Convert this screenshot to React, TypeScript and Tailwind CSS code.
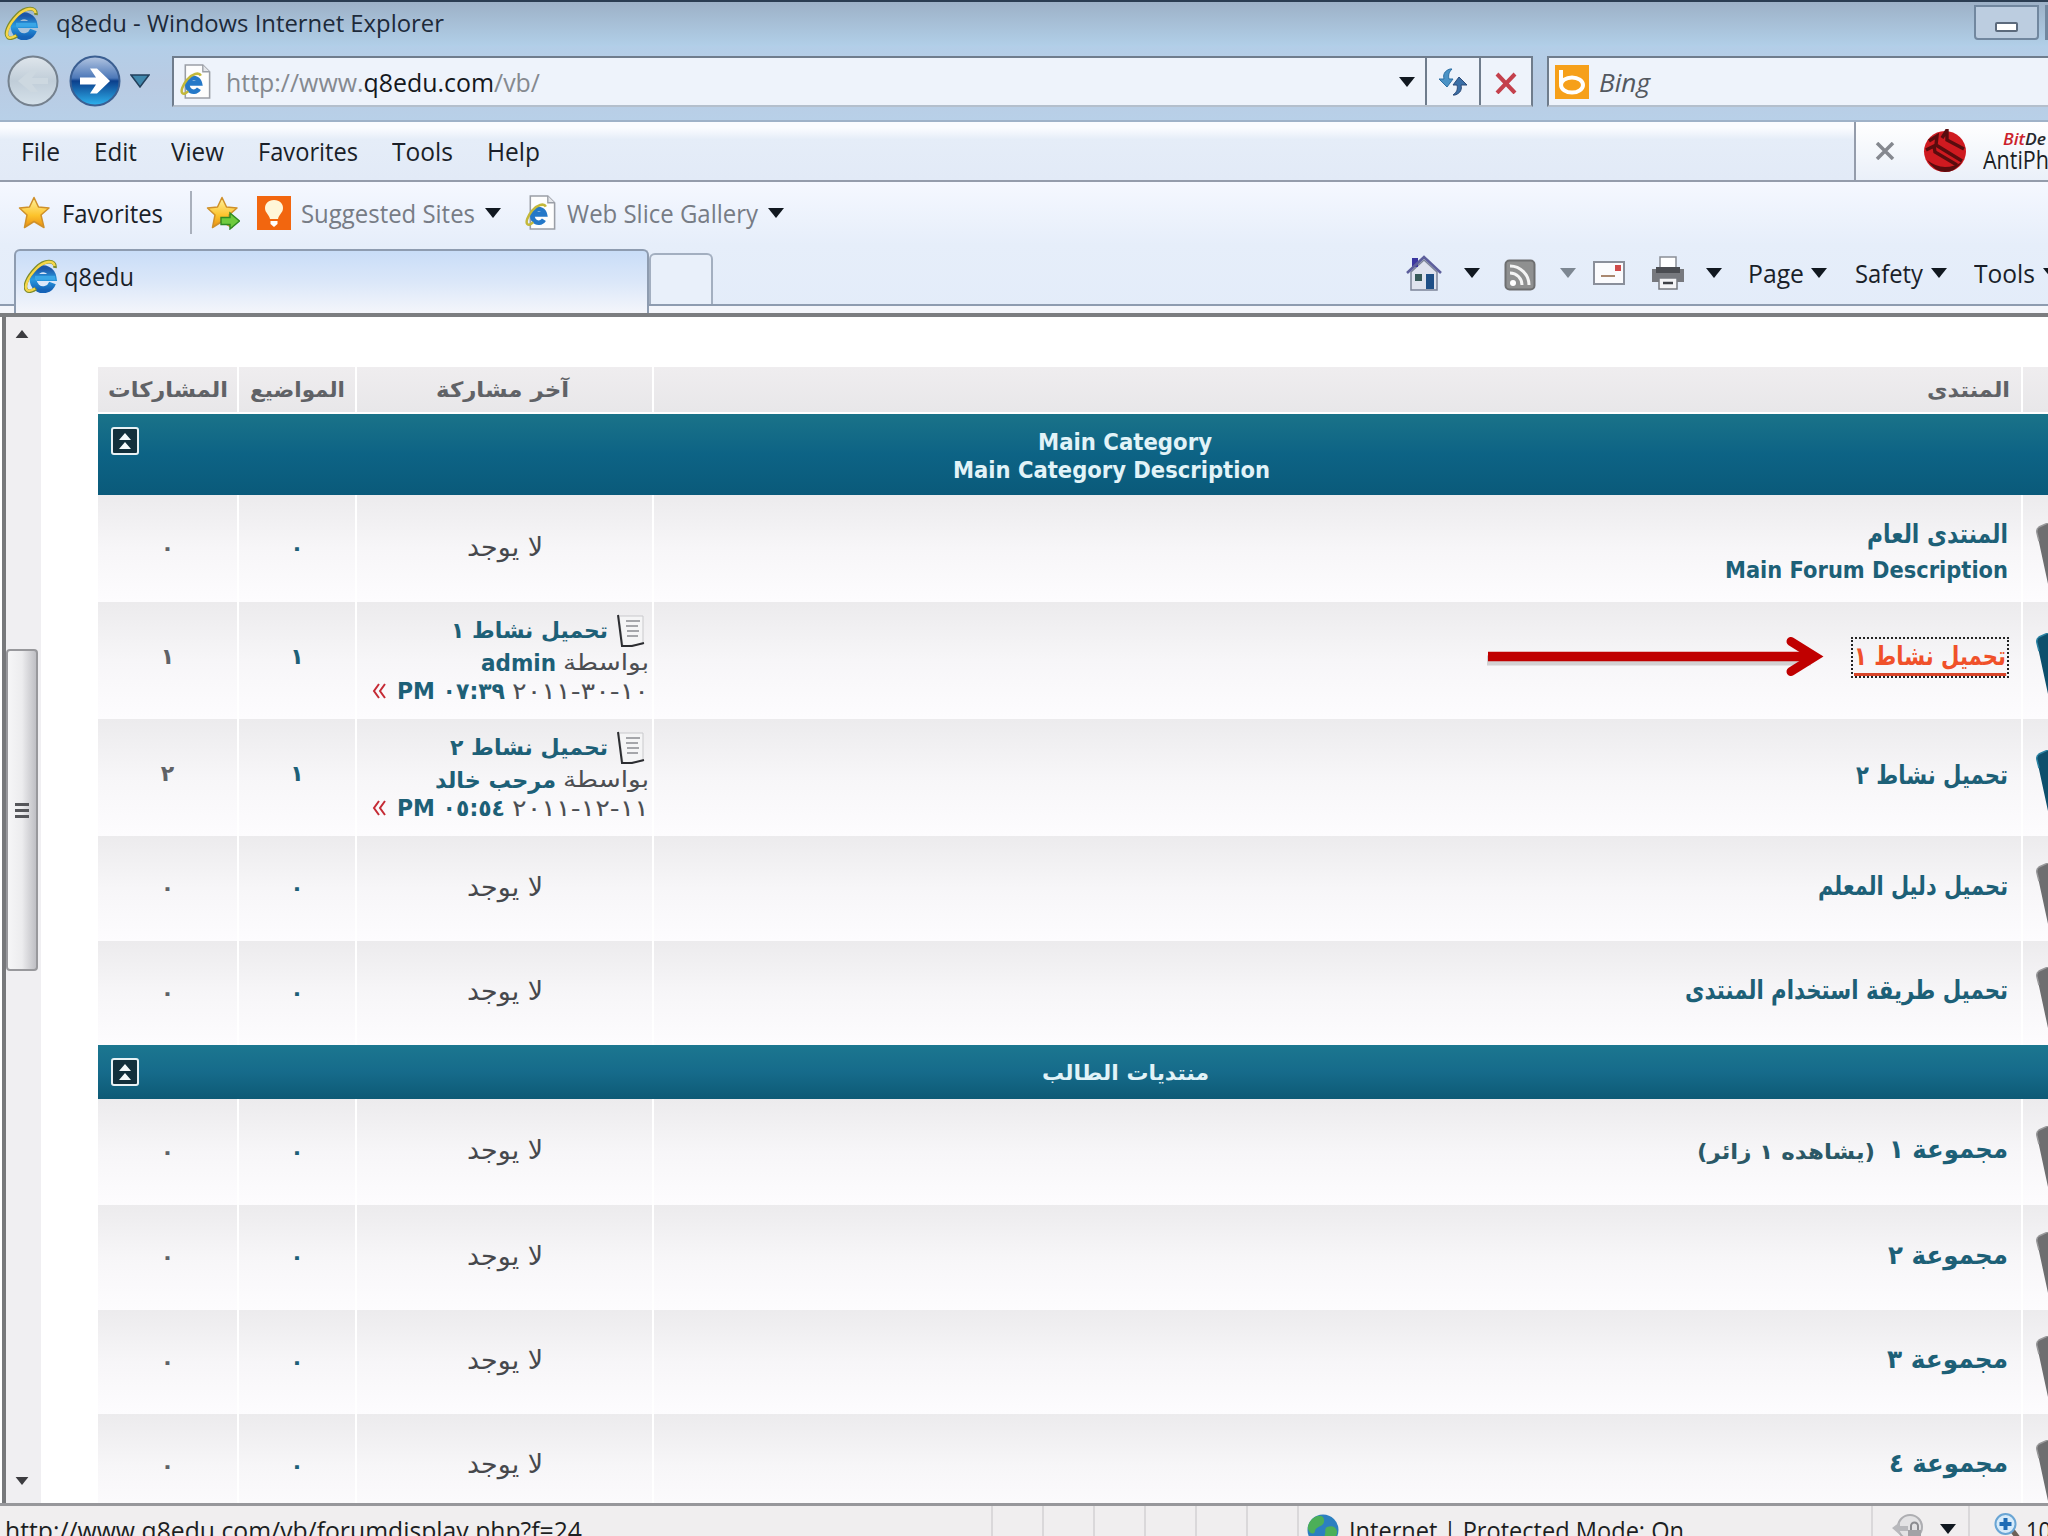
import { useLayoutEffect, useRef, useState } from 'react';
import type { ReactNode } from 'react';

const SANS = "font-['Open_Sans','Noto_Sans',sans-serif]";
const TAHOMA = "font-['DejaVu_Sans','Noto_Sans',sans-serif]";

// One line of text that is condensed or widened to fill exactly w pixels
function Fit({ w, className = '', dir = 'ltr', children }: { w: number; className?: string; dir?: 'ltr' | 'rtl'; children: ReactNode }) {
  const ref = useRef<HTMLSpanElement>(null);
  const [scale, setScale] = useState(1);

  useLayoutEffect(() => {
    if (ref.current) setScale(w / ref.current.getBoundingClientRect().width * scale);
  }, [w]);

  return (
    <span className="flex shrink-0 items-center" style={{ width: w }}>
      <span ref={ref} dir={dir} className={`block shrink-0 origin-left whitespace-pre ${className}`} style={{ transform: `scaleX(${scale})` }}>
        {children}
      </span>
    </span>
  );
}

function IELogo({ className = '' }: { className?: string }) {
  return (
    <svg viewBox="0 0 34 34" className={`shrink-0 ${className}`}>
      <defs>
        <linearGradient id="ie" x1="0" y1="0" x2="0" y2="1">
          <stop offset="0" stopColor="#1c56a8" />
          <stop offset="0.5" stopColor="#2a9be0" />
          <stop offset="1" stopColor="#1563b8" />
        </linearGradient>
      </defs>
      <path d="M28.500 24A10 10.500 0 1 1 29 18.500H13" fill="none" stroke="url(#ie)" strokeWidth="7" />
      <path d="M11 18.800h20" stroke="#3aa6e6" strokeWidth="4" />
      <path d="M31 9C32 0 20 1 12 9 3 18-1 28 3 31.500c2 1.500 6 0.500 9-2" fill="none" stroke="#7f8c2a" strokeWidth="3.600" />
      <path d="M30.500 7C30 0.500 20 2 12.500 9.500 3.500 18.500 0 28 3 31c2 1.500 5 0.500 8-1.500" fill="none" stroke="#f6d64a" strokeWidth="2.400" />
    </svg>
  );
}

function PageIcon({ className = '' }: { className?: string }) {
  return (
    <svg viewBox="0 0 32 36" className={`shrink-0 ${className}`}>
      <path d="M5 1h18l7 7v27H5z" fill="#fdfdfd" stroke="#9a9ea6" strokeWidth="1.600" />
      <path d="M23 1v7h7" fill="#e4e6ea" stroke="#9a9ea6" strokeWidth="1.400" />
      <path d="M19 25.500A6.500 7 0 1 1 20 20H9" fill="none" stroke="#2478c8" strokeWidth="4.800" />
      <path d="M21 12c-2-4-9-2-14 4S0 28 2 30c1 1 3 1 6-2" fill="none" stroke="#c3b83a" strokeWidth="2.600" />
    </svg>
  );
}

function Caret({ className = 'text-[#111820]' }: { className?: string }) {
  return (
    <svg viewBox="0 0 16 10" className={`h-2.5 w-4 shrink-0 ${className}`}>
      <path d="M0 0h16L8 10z" fill="currentColor" />
    </svg>
  );
}

function Star({ plus = false }: { plus?: boolean }) {
  return (
    <svg viewBox="0 0 34 34" className="h-[35px] w-[34px] shrink-0">
      <defs>
        <linearGradient id="star" x1="0" y1="0" x2="0" y2="1">
          <stop offset="0" stopColor="#fff3a0" />
          <stop offset="0.600" stopColor="#fcc32c" />
          <stop offset="1" stopColor="#e98d10" />
        </linearGradient>
      </defs>
      <path d="M16 2l4.500 9.500 10.500 1-8 7 3 12.500L16 26 6.500 32 9 19.500 1.500 12.500l10-1z" fill="url(#star)" stroke="#cf9029" strokeWidth="1.500" strokeLinejoin="round" />
      {plus && <path d="M15 22h9v-4.500l9.500 8-9.500 8V29h-9z" fill="#6fcb3e" stroke="#2e8a22" strokeWidth="1.400" />}
    </svg>
  );
}

function NavButton({ forward = false }: { forward?: boolean }) {
  return (
    <svg viewBox="0 0 54 54" className="h-[54px] w-[54px] shrink-0">
      <defs>
        <linearGradient id="fwd" x1="0" y1="0" x2="0" y2="1">
          <stop offset="0" stopColor="#b4c6e2" />
          <stop offset="0.440" stopColor="#4c78b8" />
          <stop offset="0.500" stopColor="#0b3f8c" />
          <stop offset="1" stopColor="#2fb4ef" />
        </linearGradient>
        <linearGradient id="back" x1="0" y1="0" x2="0" y2="1">
          <stop offset="0" stopColor="#dfe6ec" />
          <stop offset="0.500" stopColor="#c0cdd8" />
          <stop offset="1" stopColor="#d5e1ea" />
        </linearGradient>
      </defs>
      <circle cx="27" cy="27" r="24.500" fill={forward ? 'url(#fwd)' : 'url(#back)'} stroke={forward ? '#3b5f92' : '#75818e'} strokeWidth="2" />
      {forward ? (
        <path d="M12 23.500h16l-6-9h7l13 12.500-13 12.500h-7l6-9H12z" fill="#fff" />
      ) : (
        <path d="M42 24H26l6-8h-7L12 27l13 11h7l-6-8h16z" fill="#cdd8e0" />
      )}
    </svg>
  );
}

function TitleBar() {
  return (
    <div className="flex h-[46px] items-start border-t-2 border-[#2b3d52] bg-linear-to-b from-[#9db1c7] to-[#b1cfe8]">
      <IELogo className="mt-1 ml-1 h-[34px] w-[36px]" />
      <div className="mt-1 ml-4">
        <Fit w={388} className="text-2xl leading-[34px] text-[#1d2a3a]">q8edu - Windows Internet Explorer</Fit>
      </div>
      <div className="mt-[3px] ml-auto flex">
        <div className="flex h-[35px] w-[65px] items-center justify-center rounded-b border-2 border-[#71879f] bg-[#bccde0]">
          <div className="mt-2 h-2.5 w-[23px] rounded-xs border-2 border-[#5c6a7c] bg-white" />
        </div>
        <div className="ml-1.5 h-[35px] w-[3px] bg-[#71879f]" />
      </div>
    </div>
  );
}

function AddressBar() {
  return (
    <div className="flex h-[76px] items-start border-b-2 border-[#9fb2c8] bg-linear-to-b from-[#b3cee8] via-[#b9cbe3] to-[#b8d0e8] pt-2.5">
      <div className="-mt-0.5 ml-1.5 flex items-center">
        <NavButton />
        <div className="ml-2"><NavButton forward /></div>
        <svg viewBox="0 0 20 14" className="ml-2 h-3.5 w-5">
          <path d="M1 1h18L10 13z" fill="#3f87ac" stroke="#23405c" strokeWidth="1.500" />
        </svg>
      </div>
      <div className="ml-[22px] flex h-[51px] w-[1361px] items-center border-2 border-[#6f7c8c] border-b-[#b4bfcc] bg-[#eef3fb]">
        <PageIcon className="ml-1.5 h-[35px] w-8" />
        <div className="ml-3.5">
          <Fit w={314} className="text-[26px] leading-8 text-[#85898f]">
            http://www.<span className="text-[#15181d]">q8edu.com</span>/vb/
          </Fit>
        </div>
        <div className="ml-auto flex h-full items-center">
          <Caret />
          <div className="ml-2.5 flex h-full w-[54px] items-center justify-center border-l-2 border-[#6f7c8c]">
            <svg viewBox="0 0 32 30" className="h-[30px] w-8">
              <path d="M13 2C7 4 6 8 7 12H2l8 8 6-8h-4c-1-4 0-7 3-10z" fill="#4b93c6" stroke="#2d6fa3" />
              <path d="M18 28c6-2 7-6 6-10h6l-8-8-6 8h4c1 4 0 7-4 10z" fill="#3b6fa6" stroke="#2b4a78" />
            </svg>
          </div>
          <div className="flex h-full w-[52px] items-center justify-center border-l-2 border-[#6f7c8c]">
            <svg viewBox="0 0 24 22" className="mt-0.5 h-[22px] w-6">
              <path d="M3 2l18 19M21 2L3 21" stroke="#c4404c" strokeWidth="4" />
            </svg>
          </div>
        </div>
      </div>
      <div className="ml-3.5 flex h-[51px] flex-1 items-center border-2 border-r-0 border-[#6f7c8c] border-b-[#b4bfcc] bg-[#eef3fb]">
        <svg viewBox="0 0 34 34" className="ml-1.5 h-[34px] w-[34px]">
          <path d="M0 0h34v34H0z" fill="#f6a01a" />
          <path d="M6 5v14" stroke="#fff" strokeWidth="4" />
          <ellipse cx="17" cy="20" rx="11" ry="7.500" fill="#f6a01a" stroke="#fff" strokeWidth="4" />
        </svg>
        <div className="ml-2.5">
          <Fit w={51} className="text-[25px] leading-8 text-[#53585f] italic">Bing</Fit>
        </div>
      </div>
    </div>
  );
}

const menus = [
  { label: 'File', w: 39 },
  { label: 'Edit', w: 43 },
  { label: 'View', w: 53 },
  { label: 'Favorites', w: 100 },
  { label: 'Tools', w: 61 },
  { label: 'Help', w: 53 },
];

function MenuBar() {
  return (
    <div className="flex h-[60px] items-center border-b-2 border-[#949cab] bg-linear-to-b from-[#fbfcff] from-10% via-[#e5edf8] via-30% to-[#e2eaf7]">
      <div className="ml-[21px] flex gap-[34px]">
        {menus.map((m) => (
          <Fit key={m.label} w={m.w} className="text-[25px] leading-8 text-[#1a1f29]">{m.label}</Fit>
        ))}
      </div>
      <div className="ml-auto flex h-full w-[194px] items-center border-l-2 border-[#949cab] bg-linear-to-b from-white to-[#eaf0f9]">
        <svg viewBox="0 0 20 18" className="ml-[19px] h-[18px] w-5 shrink-0">
          <path d="M2 1l16 16M18 1L2 17" stroke="#85888f" strokeWidth="3.500" />
        </svg>
        <svg viewBox="0 0 44 44" className="ml-7 h-[44px] w-[44px] shrink-0">
          <ellipse cx="22" cy="22.500" rx="21" ry="20.500" fill="#cf1a20" />
          <path d="M6 12l8-5-1 9 26 16M3 21l8-4 1 6 22 13M19 9l5-8 0 10 17 9" fill="none" stroke="#5a0c0e" strokeWidth="3.400" />
          <path d="M4 31q8 12 18 12t17-10q-8 5-17 5T4 31z" fill="#5a0c0e" />
        </svg>
        <div className="ml-4 flex flex-col">
          <div className="ml-5">
            <Fit w={43} className="text-[17px] leading-4 font-semibold text-[#26292e] italic">
              <span className="text-[#cc1f2d]">Bit</span>De
            </Fit>
          </div>
          <Fit w={66} className="text-[26px] leading-6 text-[#1c1f24]">AntiPh</Fit>
        </div>
      </div>
    </div>
  );
}

function FavoritesBar() {
  return (
    <div className="flex h-[63px] items-center bg-linear-to-b from-[#f5f8ff] to-[#e6eefa] pb-0.5">
      <div className="ml-[18px]"><Star /></div>
      <div className="ml-2.5"><Fit w={101} className="text-[25px] leading-8 text-[#1a1f29]">Favorites</Fit></div>
      <div className="ml-[27px] h-[43px] w-0.5 bg-[#a9b0bc]" />
      <div className="ml-3.5"><Star plus /></div>
      <svg viewBox="0 0 34 34" className="ml-[17px] h-[34px] w-[34px]">
        <path d="M0 0h34v34H0z" fill="#f2660f" />
        <path d="M17 4c-6 0-9 4-9 8 0 5 4 6 5 11h8c1-5 5-6 5-11 0-4-3-8-9-8z" fill="#fff6d8" />
        <path d="M13.500 25h7v3l-3.500 3-3.500-3z" fill="#fff" />
      </svg>
      <div className="ml-2.5"><Fit w={174} className="text-[25px] leading-8 text-[#777c85]">Suggested Sites</Fit></div>
      <div className="ml-2.5"><Caret /></div>
      <PageIcon className="ml-6 h-[35px] w-8" />
      <div className="ml-2.5"><Fit w={191} className="text-[25px] leading-8 text-[#777c85]">Web Slice Gallery</Fit></div>
      <div className="ml-2.5"><Caret /></div>
    </div>
  );
}

function TabBar() {
  return (
    <div className="flex h-[68px] items-start bg-linear-to-b from-[#e6eefa] to-[#e3ecf9] pt-1">
      <div className="mt-[55px] h-[9px] w-3.5 border-t-2 border-[#8e9cb0] bg-[#f4f6fb]" />
      <div className="flex h-16 w-[635px] items-center rounded-t-md border-2 border-b-0 border-[#8e9cb0] bg-linear-to-b from-[#c9ddf7] via-[#dbe7f9] to-[#f4f6fb] pb-3">
        <IELogo className="ml-2 h-[34px] w-[34px]" />
        <div className="ml-1.5"><Fit w={70} className="text-[25px] leading-8 text-[#1a1f29]">q8edu</Fit></div>
      </div>
      <div className="flex h-16 flex-1 flex-col">
        <div className="flex h-[55px] items-start">
          <div className="mt-1 h-[51px] w-[64px] rounded-t-md border-2 border-b-0 border-[#a3afc0] bg-[#e9f0fa]" />
          <div className="ml-auto flex h-12 items-center">
            <svg viewBox="0 0 36 36" className="h-9 w-9">
              <path d="M5 17v18h26V17L18 5z" fill="#dfe3ee" stroke="#7c8498" strokeWidth="1.500" />
              <path d="M6 3h6v9H6z" fill="#3a36a0" />
              <path d="M1 18L18 2l17 16" fill="none" stroke="#5d5f9c" strokeWidth="2.600" />
              <path d="M9 19h7v7H9z" fill="#375a58" />
              <path d="M20 19h8v15h-8z" fill="#1f4f86" />
            </svg>
            <div className="ml-[22px]"><Caret /></div>
            <svg viewBox="0 0 32 32" className="mt-1 ml-6 h-8 w-8">
              <rect x="1.500" y="1.500" width="29" height="29" rx="4" fill="#8f9090" stroke="#6e6f70" strokeWidth="2" />
              <circle cx="9" cy="24" r="3" fill="#fff" />
              <path d="M6 14a12 12 0 0 1 12 12M6 7a19 19 0 0 1 19 19" fill="none" stroke="#f4f4f4" strokeWidth="3" />
            </svg>
            <div className="ml-6"><Caret className="text-[#7d8792]" /></div>
            <svg viewBox="0 0 32 24" className="ml-[17px] h-6 w-8">
              <path d="M1 1h30v22H1z" fill="#fbfbfd" stroke="#8a8f9a" strokeWidth="2" />
              <path d="M22 4h6v6h-6z" fill="#cf4a4a" />
              <path d="M8 15h14" stroke="#a9876f" strokeWidth="2" />
            </svg>
            <svg viewBox="0 0 36 36" className="ml-[25px] h-9 w-9">
              <path d="M10 2h16v12H10z" fill="#fff" stroke="#8b8f96" strokeWidth="1.500" />
              <path d="M2 14h32v13H2z" fill="#77797e" />
              <path d="M6 12h24v6H6z" fill="#4b4d52" />
              <path d="M9 23h18v11H9z" fill="#f4f4f6" stroke="#777a80" strokeWidth="1.500" />
              <path d="M13 28h10" stroke="#3f4146" strokeWidth="2.500" />
            </svg>
            <div className="ml-5"><Caret /></div>
            <div className="ml-[26px]"><Fit w={56} className="text-[25px] leading-8 text-[#1a1f29]">Page</Fit></div>
            <div className="ml-[7px]"><Caret /></div>
            <div className="ml-7"><Fit w={68} className="text-[25px] leading-8 text-[#1a1f29]">Safety</Fit></div>
            <div className="ml-2"><Caret /></div>
            <div className="ml-[27px]"><Fit w={61} className="text-[25px] leading-8 text-[#1a1f29]">Tools</Fit></div>
            <div className="ml-2 w-[5px] overflow-hidden"><Caret /></div>
          </div>
        </div>
        <div className="h-[9px] border-t-2 border-[#8e9cb0] bg-[#f4f6fb]" />
      </div>
    </div>
  );
}

function ScrollBar() {
  return (
    <div className="flex w-[39px] shrink-0 flex-col items-center border-l-4 border-[#77787b] bg-[#f0eff2] pr-1">
      <svg viewBox="0 0 16 10" className="mt-[13px] h-2 w-3.5"><path d="M8 0l8 10H0z" fill="#3c3c40" /></svg>
      <div className="mt-[311px] flex h-[322px] w-8 shrink-0 flex-col items-center justify-center gap-[3px] rounded-sm border-2 border-[#98989c] bg-linear-to-r from-[#f6f6f7] via-[#ececee] to-[#bfbfc4]">
        <div className="h-[3px] w-3.5 bg-[#55565a]" />
        <div className="h-[3px] w-3.5 bg-[#55565a]" />
        <div className="h-[3px] w-3.5 bg-[#55565a]" />
      </div>
      <svg viewBox="0 0 16 10" className="mt-auto mb-[18px] h-2 w-3.5"><path d="M0 0h16L8 10z" fill="#3c3c40" /></svg>
    </div>
  );
}

type LastPost = { title: string; titleW: number; by: ReactNode; byW: number; date: string; time: string };
type Forum = {
  name: string;
  w: number;
  h: string;
  sub?: string;
  viewing?: string;
  focus?: boolean;
  topics: string;
  posts: string;
  last?: LastPost;
};

const mainForums: Forum[] = [
  { name: 'المنتدى العام', w: 141, h: 'h-[107px]', sub: 'Main Forum Description', topics: '٠', posts: '٠' },
  {
    name: 'تحميل نشاط ١', w: 152, h: 'h-[117px]', focus: true, topics: '١', posts: '١',
    last: { title: 'تحميل نشاط ١', titleW: 157, by: 'admin', byW: 75, date: '٢٠١١-٣٠-١٠', time: '٠٧:٣٩' },
  },
  {
    name: 'تحميل نشاط ٢', w: 152, h: 'h-[117px]', topics: '١', posts: '٢',
    last: { title: 'تحميل نشاط ٢', titleW: 158, by: 'مرحب خالد', byW: 121, date: '٢٠١١-١٢-١١', time: '٠٥:٥٤' },
  },
  { name: 'تحميل دليل المعلم', w: 190, h: 'h-[105px]', topics: '٠', posts: '٠' },
  { name: 'تحميل طريقة استخدام المنتدى', w: 323, h: 'h-[104px]', topics: '٠', posts: '٠' },
];

const studentForums: Forum[] = [
  { name: 'مجموعة ١', w: 119, h: 'h-[106px]', viewing: '(يشاهده ١ زائر)', topics: '٠', posts: '٠' },
  { name: 'مجموعة ٢', w: 120, h: 'h-[105px]', topics: '٠', posts: '٠' },
  { name: 'مجموعة ٣', w: 121, h: 'h-[104px]', topics: '٠', posts: '٠' },
  { name: 'مجموعة ٤', w: 119, h: 'h-[104px]', topics: '٠', posts: '٠' },
];

const GRID = 'grid shrink-0 grid-cols-[139px_116px_295px_1367px_1fr] gap-0.5';
const CELL = 'flex items-center bg-linear-to-b from-[#ecebed] via-[#f7f6f8] to-[#fdfcfe]';

function LastPostCell({ post }: { post: LastPost }) {
  return (
    <div className={`${CELL} flex-col justify-center !items-end pr-[3px] pb-[3px]`}>
      <div className="mr-1 flex h-9 items-center gap-[9px]">
        <Fit w={post.titleW} dir="rtl" className="text-[22px] leading-8 font-bold text-[#1d6077]">{post.title}</Fit>
        <svg viewBox="0 0 28 34" className="h-[34px] w-7">
          <path d="M2 2h24v28l-20 2z" fill="#f5f5f6" stroke="#c9c9cc" />
          <path d="M1 1l4 31 10 0 12-3" fill="none" stroke="#2c2d31" strokeWidth="2" />
          <path d="M9 7h14M9 12h12M10 17h12M10 22h11" stroke="#a5a6aa" strokeWidth="2" />
        </svg>
      </div>
      <div className="flex h-7 items-center gap-[7px]">
        <Fit w={post.byW} dir="rtl" className="text-[23px] leading-7 font-bold text-[#1d6077]">{post.by}</Fit>
        <Fit w={86} dir="rtl" className="text-[22px] leading-7 text-[#4c4e52]">بواسطة</Fit>
      </div>
      <div className="flex h-7 items-center">
        <svg viewBox="0 0 14 16" className="mr-[11px] h-4 w-3.5">
          <path d="M7 1L2 8l5 7M13 1L8 8l5 7" fill="none" stroke="#c52b35" strokeWidth="2" />
        </svg>
        <Fit w={108} className="text-[23px] leading-7 font-bold text-[#1d6077]">PM {post.time}</Fit>
        <div className="ml-[7px]">
          <Fit w={137} className="text-[23px] leading-7 text-[#4c4e52] [unicode-bidi:bidi-override]">{post.date}</Fit>
        </div>
      </div>
    </div>
  );
}

function ForumRow({ forum }: { forum: Forum }) {
  const active = Boolean(forum.last);
  return (
    <div className={`${GRID} ${forum.h}`}>
      <div className={`${CELL} justify-center text-[22px] font-bold text-[#606266] ${active ? 'pb-2' : 'pb-0.5'}`}>{forum.posts}</div>
      <div className={`${CELL} justify-center text-[22px] font-bold text-[#1d6077] ${active ? 'pb-2' : 'pb-0.5'}`}>{forum.topics}</div>
      {forum.last ? (
        <LastPostCell post={forum.last} />
      ) : (
        <div className={`${CELL} justify-center pb-1`}>
          <Fit w={76} dir="rtl" className="text-[26px] leading-9 text-[#46484c]">لا يوجد</Fit>
        </div>
      )}
      <div className={`${CELL} flex-col justify-center !items-end pr-[13px] ${forum.sub ? 'pt-1.5' : 'pb-1.5'}`}>
        <div className="flex items-center gap-3.5">
          {forum.viewing && (
            <div className="pt-1.5">
              <Fit w={178} dir="rtl" className="text-[21px] leading-9 font-bold text-[#2b5866]">{forum.viewing}</Fit>
            </div>
          )}
          {forum.focus ? (
            <div className="-mr-px flex h-[41px] items-center border-2 border-dotted border-[#222] px-px">
              <Fit w={152} dir="rtl" className="border-b-3 border-[#d8452a] text-[26px] leading-[33px] font-bold text-[#f0512a]">{forum.name}</Fit>
            </div>
          ) : (
            <Fit w={forum.w} dir="rtl" className="text-[26px] leading-9 font-bold text-[#1d6077]">{forum.name}</Fit>
          )}
        </div>
        {forum.sub && <Fit w={283} className="text-[23px] leading-9 font-bold text-[#1d6077]">{forum.sub}</Fit>}
      </div>
      <div className={`${CELL} justify-end overflow-hidden ${active ? 'pt-1.5' : 'pt-2.5'}`}>
        <svg viewBox="0 0 12 62" className="h-[62px] w-3">
          <path d="M12 0L3 4Q0 6 1 10L12 61z" fill={active ? '#0d4f6c' : '#6e6e70'} />
          <path d="M12 0L3 4Q0 6 1 10L3 18" fill="none" stroke={active ? '#2b83a3' : '#98989a'} strokeWidth="1.500" />
        </svg>
      </div>
    </div>
  );
}

function CollapseButton() {
  return (
    <svg viewBox="0 0 28 28" className="h-7 w-7 shrink-0">
      <rect x="1" y="1" width="26" height="26" rx="2" fill="#12303c" stroke="#e8f2f5" strokeWidth="2" />
      <path d="M14 6l6 7H8zM14 15l6 7H8z" fill="#f4fafb" />
    </svg>
  );
}

export default function App() {
  return (
    <div className={`flex h-[1536px] w-[2048px] flex-col overflow-hidden bg-white *:shrink-0 ${SANS}`}>
      <TitleBar />
      <AddressBar />
      <MenuBar />
      <FavoritesBar />
      <TabBar />
      <div className="flex h-[1193px] border-t-4 border-b-3 border-[#7b7d80] border-b-[#97979b] pl-0.5">
        <ScrollBar />
        <div className={`ml-[57px] flex flex-1 flex-col pt-[50px] ${TAHOMA} overflow-hidden`}>
          <div className={`${GRID} h-[47px] pb-0.5 *:flex *:items-center *:justify-center *:bg-linear-to-b *:from-[#efedef] *:to-[#e8e7e9]`}>
            <div><Fit w={120} dir="rtl" className="text-[21px] leading-9 font-bold text-[#606266]">المشاركات</Fit></div>
            <div><Fit w={95} dir="rtl" className="text-[21px] leading-9 font-bold text-[#606266]">المواضيع</Fit></div>
            <div className="pr-1"><Fit w={133} dir="rtl" className="text-[21px] leading-9 font-bold text-[#606266]">آخر مشاركة</Fit></div>
            <div className="!justify-end pr-[11px]"><Fit w={83} dir="rtl" className="text-[21px] leading-9 font-bold text-[#606266]">المنتدى</Fit></div>
            <div />
          </div>
          <div className="flex h-[81px] shrink-0 items-start bg-linear-to-b from-[#1a7389] via-[#0d6385] to-[#0a5a7a] pt-[13px] pl-[13px]">
            <CollapseButton />
            <div className="mt-px ml-[814px] flex flex-col items-center">
              <div className="pl-[27px]">
                <Fit w={174} className="text-[23px] leading-7 font-bold text-[#e2f3f8]">Main Category</Fit>
              </div>
              <Fit w={317} className="text-[23px] leading-7 font-bold text-[#e2f3f8]">Main Category Description</Fit>
            </div>
          </div>
          {mainForums.map((f) => <ForumRow key={f.name} forum={f} />)}
          <div className="flex h-[54px] shrink-0 items-center bg-linear-to-b from-[#1c7790] via-[#166b8b] to-[#0d5a75] pl-[13px]">
            <CollapseButton />
            <div className="pt-0.5 ml-[903px]">
              <Fit w={167} dir="rtl" className="text-[21px] leading-9 font-bold text-[#e2f3f8]">منتديات الطالب</Fit>
            </div>
          </div>
          {studentForums.map((f) => <ForumRow key={f.name} forum={f} />)}
        </div>
      </div>
      <div className="flex h-[30px] items-start overflow-hidden bg-[#f0eeef] *:shrink-0">
        <div className="mt-1.5 ml-[5px]"><Fit w={577} className="text-[25px] leading-9 text-[#1d1f23]">http://www.q8edu.com/vb/forumdisplay.php?f=24</Fit></div>
        <div className="ml-[409px] flex h-full gap-[49px]">
          {[0, 1, 2, 3, 4, 5, 6].map((i) => <div key={i} className="w-0.5 bg-[#dad8da]" />)}
        </div>
        <svg viewBox="0 0 32 32" className="mt-2 ml-2 h-8 w-8">
          <circle cx="16" cy="16" r="15.500" fill="#2c7fc0" />
          <path d="M8 3c6-3 10 0 9 5s-8 4-9 9-6 2-7-2 3-10 7-12zM20 13c5-2 9 0 10 4s-4 10-8 11-5-5-4-8-1-5 2-7z" fill="#4caf58" />
        </svg>
        <div className="mt-1.5 ml-2.5"><Fit w={335} className="text-[25px] leading-9 text-[#1d1f23]">Internet | Protected Mode: On</Fit></div>
        <div className="ml-[187px] h-full w-0.5 bg-[#dad8da]" />
        <svg viewBox="0 0 34 34" className="mt-1.5 ml-[17px] h-[34px] w-[34px]">
          <circle cx="20" cy="15" r="12" fill="#e3e2e4" stroke="#aeaeb2" strokeWidth="2" />
          <path d="M2 16l8-6v4h8v5h-8v4z" fill="#b8b8bc" />
          <path d="M18 18h13v12H18z" fill="#a2a2a6" />
          <path d="M21 18v-4a3.500 3.500 0 0 1 7 0v4" fill="none" stroke="#8c8c90" strokeWidth="2" />
        </svg>
        <div className="mt-[18px] ml-4"><Caret /></div>
        <div className="ml-3 h-full w-0.5 bg-[#dad8da]" />
        <svg viewBox="0 0 30 34" className="mt-1.5 ml-6 h-[34px] w-[30px]">
          <path d="M18 18l9 12" stroke="#6d6259" strokeWidth="5" />
          <circle cx="11.500" cy="12" r="10" fill="#d7ebfa" stroke="#6aa5d4" strokeWidth="2" />
          <path d="M11.500 6v12M5.500 12h12" stroke="#1f6cb5" strokeWidth="4" />
        </svg>
        <div className="mt-1.5 ml-0.5"><Fit w={56} className="text-[25px] leading-9 text-[#1d1f23]">100%</Fit></div>
      </div>
      {/* annotation arrow laid over the page */}
      <svg viewBox="0 0 350 60" className="absolute top-[630px] left-[1484px] h-[60px] w-[350px]">
        <g fill="none" stroke="#8b8b8b" strokeOpacity="0.350" strokeWidth="10" transform="translate(-1 4)">
          <path d="M4 26.500h324" />
        </g>
        <path d="M4 26.500h324" stroke="#c00000" strokeWidth="9.500" />
        <path d="M307 11.500l24 15-24 15" fill="none" stroke="#c00000" strokeWidth="9" strokeLinecap="round" />
      </svg>
    </div>
  );
}
